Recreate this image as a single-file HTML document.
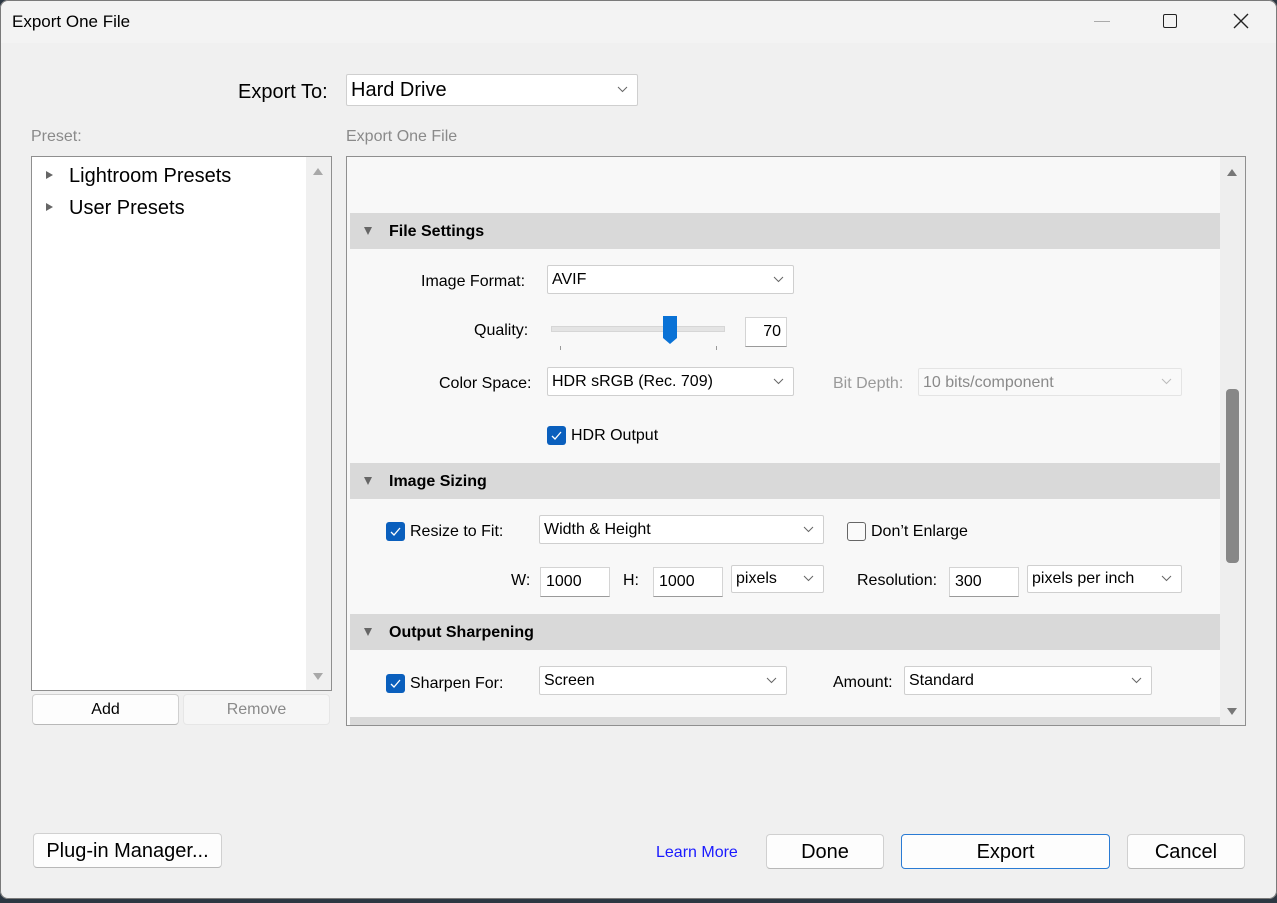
<!DOCTYPE html>
<html><head><meta charset="utf-8">
<style>
*{box-sizing:border-box;margin:0;padding:0}
html,body{width:1277px;height:903px;overflow:hidden;background:#2c3742;font-family:"Liberation Sans",sans-serif;color:#000}
#win{position:absolute;left:0;top:0;width:1277px;height:899px;background:#f0f0f0;box-shadow:inset 0 0 0 1px #7a7a7a;border-radius:8px;overflow:hidden}
.a{position:absolute}
.t{position:absolute;white-space:nowrap}
.dd{position:absolute;background:#fff;border:1px solid #cfcfcf;border-radius:2px;font-size:16px;padding-left:4px;white-space:nowrap}
.dd svg{position:absolute;right:9px;top:50%;margin-top:-4px}
.inp{position:absolute;background:#fff;border:1px solid #d4d4d4;border-bottom:1px solid #9a9a9a;font-size:16px;padding-left:5px}
.hdr{position:absolute;left:3px;width:870px;height:36px;background:#d9d9d9;font-weight:bold;font-size:16px}
.hdr span{position:absolute;left:39px;top:10px}
.hdr i{position:absolute;left:14px;top:14px;width:0;height:0;border-left:4px solid transparent;border-right:4px solid transparent;border-top:8px solid #666}
.cb{position:absolute;width:19px;height:19px;border-radius:3px;background:#0a5fbd}
.cb svg{position:absolute;left:3px;top:4px}
.btn{position:absolute;background:#fdfdfd;border:1px solid #d0d0d0;border-bottom-color:#b8b8b8;border-radius:4px;text-align:center;font-size:20px}
.lbl{font-size:16px}
</style></head><body>
<div id="win">
<div class="a" style="left:1px;top:1px;width:1275px;height:42px;background:#f3f3f3;border-radius:8px 8px 0 0"></div>
<div class="t" style="left:12px;top:12px;font-size:17px">Export One File</div>
<div class="a" style="left:1094px;top:21px;width:16px;height:1px;background:#aaa"></div>
<div class="a" style="left:1163px;top:14px;width:14px;height:14px;border:1.5px solid #222;border-radius:2px"></div>
<svg class="a" style="left:1233px;top:13px" width="16" height="16"><path d="M1 1L15 15M15 1L1 15" stroke="#222" stroke-width="1.4"/></svg>

<div class="t" style="left:238px;top:81px;font-size:20px">Export To:</div>
<div class="dd" style="left:346px;top:74px;width:292px;height:32px;font-size:20px;padding-top:4px">Hard Drive<svg width="11" height="7"><path d="M1 1L5.5 5.5L10 1" stroke="#666" fill="none"/></svg></div>

<div class="t" style="left:31px;top:128px;font-size:16px;color:#8a8a8a">Preset:</div>
<div class="t" style="left:346px;top:128px;font-size:16px;color:#8a8a8a">Export One File</div>

<div class="a" style="left:31px;top:156px;width:301px;height:535px;background:#fff;border:1px solid #8f8f8f">
 <div class="a" style="left:274px;top:0;width:25px;height:533px;background:#f0f0f0"></div>
 <div class="a" style="left:281px;top:11px;border-left:5px solid transparent;border-right:5px solid transparent;border-bottom:7px solid #a8a8a8"></div>
 <div class="a" style="left:281px;top:516px;border-left:5px solid transparent;border-right:5px solid transparent;border-top:7px solid #a8a8a8"></div>
 <div class="a" style="left:14px;top:14px;border-top:4px solid transparent;border-bottom:4px solid transparent;border-left:7px solid #666"></div>
 <div class="a" style="left:14px;top:46px;border-top:4px solid transparent;border-bottom:4px solid transparent;border-left:7px solid #666"></div>
 <div class="t" style="left:37px;top:8px;font-size:20px">Lightroom Presets</div>
 <div class="t" style="left:37px;top:40px;font-size:20px">User Presets</div>
</div>
<div class="btn" style="left:32px;top:694px;width:147px;height:31px;font-size:16px;padding-top:6px">Add</div>
<div class="btn" style="left:183px;top:694px;width:147px;height:31px;font-size:16px;padding-top:6px;color:#8a8a8a;background:#f6f6f6;border-color:#e6e6e6">Remove</div>

<div class="a" style="left:346px;top:156px;width:900px;height:570px;background:#f8f8f8;border:1px solid #8f8f8f">
 <div class="a" style="left:873px;top:0;width:25px;height:568px;background:#eeeeee"></div>
 <div class="a" style="left:880px;top:12px;border-left:5px solid transparent;border-right:5px solid transparent;border-bottom:7px solid #777"></div>
 <div class="a" style="left:880px;top:551px;border-left:5px solid transparent;border-right:5px solid transparent;border-top:7px solid #777"></div>
 <div class="a" style="left:879px;top:232px;width:13px;height:174px;border-radius:4px;background:#878787"></div>

 <div class="hdr" style="top:56px"><i></i><span>File Settings</span></div>
 <div class="hdr" style="top:306px"><i></i><span>Image Sizing</span></div>
 <div class="hdr" style="top:457px"><i></i><span>Output Sharpening</span></div>
 <div class="a" style="left:3px;top:560px;width:870px;height:8px;background:#d9d9d9"></div>
</div>

<div class="t lbl" style="left:421px;top:273px">Image Format:</div>
<div class="dd" style="left:547px;top:265px;width:247px;height:29px;padding-top:5px">AVIF<svg width="11" height="7"><path d="M1 1L5.5 5.5L10 1" stroke="#666" fill="none"/></svg></div>

<div class="t lbl" style="left:474px;top:322px">Quality:</div>
<div class="a" style="left:551px;top:326px;width:174px;height:6px;background:#e4e4e4;border:1px solid #d6d6d6"></div>
<div class="a" style="left:560px;top:346px;width:1px;height:4px;background:#999"></div>
<div class="a" style="left:716px;top:346px;width:1px;height:4px;background:#999"></div>
<svg class="a" style="left:662px;top:316px" width="16" height="29"><path d="M1 0H15V22L8 28L1 22Z" fill="#0a72d6"/></svg>
<div class="inp" style="left:745px;top:317px;width:42px;height:30px;text-align:right;padding-right:5px;padding-top:5px">70</div>

<div class="t lbl" style="left:439px;top:375px">Color Space:</div>
<div class="dd" style="left:547px;top:367px;width:247px;height:29px;padding-top:5px">HDR sRGB (Rec. 709)<svg width="11" height="7"><path d="M1 1L5.5 5.5L10 1" stroke="#666" fill="none"/></svg></div>
<div class="t lbl" style="left:833px;top:375px;color:#9a9a9a">Bit Depth:</div>
<div class="dd" style="left:918px;top:368px;width:264px;height:28px;padding-top:5px;color:#8a8a8a;background:#f9f9f9;border-color:#e4e4e4">10 bits/component<svg width="11" height="7"><path d="M1 1L5.5 5.5L10 1" stroke="#bbb" fill="none"/></svg></div>

<div class="cb" style="left:547px;top:426px"><svg width="13" height="11"><path d="M2 6L5 9L11 2" stroke="#fff" fill="none" stroke-width="1.3"/></svg></div>
<div class="t lbl" style="left:571px;top:427px">HDR Output</div>

<div class="cb" style="left:386px;top:522px"><svg width="13" height="11"><path d="M2 6L5 9L11 2" stroke="#fff" fill="none" stroke-width="1.3"/></svg></div>
<div class="t lbl" style="left:410px;top:523px">Resize to Fit:</div>
<div class="dd" style="left:539px;top:515px;width:285px;height:29px;padding-top:5px">Width &amp; Height<svg width="11" height="7"><path d="M1 1L5.5 5.5L10 1" stroke="#666" fill="none"/></svg></div>
<div class="a" style="left:847px;top:522px;width:19px;height:19px;border:1px solid #666;border-radius:3px;background:#fafafa"></div>
<div class="t lbl" style="left:871px;top:523px">Don’t Enlarge</div>

<div class="t lbl" style="left:511px;top:572px">W:</div>
<div class="inp" style="left:540px;top:567px;width:70px;height:30px;padding-top:5px">1000</div>
<div class="t lbl" style="left:623px;top:572px">H:</div>
<div class="inp" style="left:653px;top:567px;width:70px;height:30px;padding-top:5px">1000</div>
<div class="dd" style="left:731px;top:565px;width:93px;height:28px;padding-top:4px">pixels<svg width="11" height="7"><path d="M1 1L5.5 5.5L10 1" stroke="#666" fill="none"/></svg></div>
<div class="t lbl" style="left:857px;top:572px">Resolution:</div>
<div class="inp" style="left:949px;top:567px;width:70px;height:30px;padding-top:5px">300</div>
<div class="dd" style="left:1027px;top:565px;width:155px;height:28px;padding-top:4px">pixels per inch<svg width="11" height="7"><path d="M1 1L5.5 5.5L10 1" stroke="#666" fill="none"/></svg></div>

<div class="cb" style="left:386px;top:674px"><svg width="13" height="11"><path d="M2 6L5 9L11 2" stroke="#fff" fill="none" stroke-width="1.3"/></svg></div>
<div class="t lbl" style="left:410px;top:675px">Sharpen For:</div>
<div class="dd" style="left:539px;top:666px;width:248px;height:29px;padding-top:5px">Screen<svg width="11" height="7"><path d="M1 1L5.5 5.5L10 1" stroke="#666" fill="none"/></svg></div>
<div class="t lbl" style="left:833px;top:674px">Amount:</div>
<div class="dd" style="left:904px;top:666px;width:248px;height:29px;padding-top:5px">Standard<svg width="11" height="7"><path d="M1 1L5.5 5.5L10 1" stroke="#666" fill="none"/></svg></div>

<div class="btn" style="left:33px;top:833px;width:189px;height:35px;padding-top:6px">Plug-in Manager...</div>
<div class="t" style="left:656px;top:844px;font-size:16px;color:#1a1aff">Learn More</div>
<div class="btn" style="left:766px;top:834px;width:118px;height:35px;padding-top:6px">Done</div>
<div class="btn" style="left:901px;top:834px;width:209px;height:35px;padding-top:6px;border:1px solid #2a7bd4">Export</div>
<div class="btn" style="left:1127px;top:834px;width:118px;height:35px;padding-top:6px">Cancel</div>
</div>
</body></html>
